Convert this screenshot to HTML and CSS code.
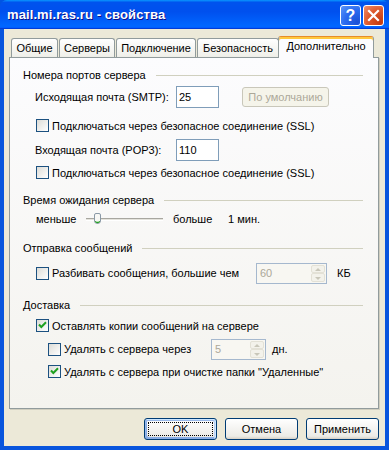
FILE: index.html
```html
<!DOCTYPE html>
<html lang="ru">
<head>
<meta charset="utf-8">
<title>mail.mi.ras.ru - свойства</title>
<link rel="stylesheet" href="styles.css">
</head>
<body>
<div class="window">
  <div class="titlebar">
    <span class="title">mail.mi.ras.ru - свойства</span>
    <div class="title-buttons">
      <span class="tbtn help">?</span>
      <span class="tbtn close"><svg width="13" height="13" viewBox="0 0 13 13"><path d="M2 2 L11 11 M11 2 L2 11" stroke="#fff" stroke-width="2.2" stroke-linecap="square"/></svg></span>
    </div>
  </div>
  <div class="body">
    <div class="tabs">
      <div class="tab t-general">Общие</div>
      <div class="tab t-servers">Серверы</div>
      <div class="tab t-connect">Подключение</div>
      <div class="tab t-security">Безопасность</div>
      <div class="tab active t-advanced">Дополнительно</div>
    </div>
    <div class="panel">
      <div class="group-head gh-ports"><span>Номера портов сервера</span><span class="rule"></span></div>
      <div class="row field r-smtp">
        <span class="field-label">Исходящая почта (SMTP):</span>
        <span class="textbox">25</span>
        <span class="button disabled">По умолчанию</span>
      </div>
      <div class="row check r-ssl1"><span class="cb"></span><span>Подключаться через безопасное соединение (SSL)</span></div>
      <div class="row field r-pop3">
        <span class="field-label">Входящая почта (POP3):</span>
        <span class="textbox">110</span>
      </div>
      <div class="row check r-ssl2"><span class="cb"></span><span>Подключаться через безопасное соединение (SSL)</span></div>

      <div class="group-head gh-timeout"><span>Время ожидания сервера</span><span class="rule"></span></div>
      <div class="row slider-row">
        <span class="s-less">меньше</span>
        <span class="track"><span class="thumb"><svg width="7" height="11" viewBox="0 0 7 11"><path d="M0.5 2 Q0.5 0.5 2 0.5 L5 0.5 Q6.5 0.5 6.5 2 L6.5 8 Q6.5 10.5 3.5 10.5 Q0.5 10.5 0.5 8 Z" fill="#F7F7F4" stroke="#8A99A6"/><path d="M1.2 8.4 Q3.5 10.6 5.8 8.4" fill="none" stroke="#21A121" stroke-width="1.2"/></svg></span></span>
        <span class="s-more">больше</span>
        <span class="s-value">1 мин.</span>
      </div>

      <div class="group-head gh-send"><span>Отправка сообщений</span><span class="rule"></span></div>
      <div class="row check r-split">
        <span class="cb"></span>
        <span class="split-label">Разбивать сообщения, большие чем</span>
        <span class="spin spin-kb"><span class="spin-val">60</span><span class="spin-btns"><span class="sb up"></span><span class="sb down"></span></span></span>
        <span class="unit-kb">КБ</span>
      </div>

      <div class="group-head gh-delivery"><span>Доставка</span><span class="rule"></span></div>
      <div class="row check r-keep"><span class="cb checked"><svg width="11" height="11" viewBox="0 0 11 11"><path d="M2 4.5 L4.3 7 L9 2.2" fill="none" stroke="#21A121" stroke-width="2"/></svg></span><span>Оставлять копии сообщений на сервере</span></div>
      <div class="row check sub r-del-after">
        <span class="cb"></span>
        <span class="del-label">Удалять с сервера через</span>
        <span class="spin spin-days"><span class="spin-val">5</span><span class="spin-btns"><span class="sb up"></span><span class="sb down"></span></span></span>
        <span class="unit-days">дн.</span>
      </div>
      <div class="row check sub r-del-clean"><span class="cb checked"><svg width="11" height="11" viewBox="0 0 11 11"><path d="M2 4.5 L4.3 7 L9 2.2" fill="none" stroke="#21A121" stroke-width="2"/></svg></span><span>Удалять с сервера при очистке папки "Удаленные"</span></div>
    </div>
    <div class="actions">
      <span class="button default">OK</span>
      <span class="button">Отмена</span>
      <span class="button">Применить</span>
    </div>
  </div>
</div>
</body>
</html>
```

FILE: styles.css
```css
* { box-sizing: border-box; }
html, body { margin: 0; padding: 0; }
body {
  width: 389px;
  height: 450px;
  overflow: hidden;
  background: #0054E3;
  font-family: "Liberation Sans", Arial, sans-serif;
  font-size: 11px;
  color: #000;
}
.window {
  width: 389px;
  height: 450px;
  display: flex;
  flex-direction: column;
  background: #0855DD;
  border-radius: 7px 7px 0 0;
  overflow: hidden;
}
.titlebar {
  height: 29px;
  flex: none;
  display: flex;
  align-items: center;
  justify-content: space-between;
  padding: 0 5px 0 7px;
  background: linear-gradient(180deg, #0997ff, #0053ee 8%, #0050ee 40%, #0066ff 88%, #0066ff 93%, #005bff 95%, #003dd7 96%, #003dd7);
}
.title {
  color: #fff;
  font-weight: bold;
  font-size: 13px;
  letter-spacing: 0.1px;
  text-shadow: 1px 1px #0F1089;
  padding-bottom: 1px;
}
.title-buttons { display: flex; gap: 2px; padding-top: 2px; }
.tbtn {
  width: 21px;
  height: 21px;
  border: 1px solid #fff;
  border-radius: 3px;
  display: flex;
  align-items: center;
  justify-content: center;
}
.help {
  background: radial-gradient(circle at 85% 85%, #1B4FD6 0%, #2C6CF0 55%, #5C97F8 100%);
  color: #fff;
  font-weight: bold;
  font-size: 16px;
  font-family: "Liberation Sans", Arial, sans-serif;
}
.close {
  background: radial-gradient(circle at 85% 85%, #C43A10 0%, #DD5A2E 55%, #F09070 100%);
}
.body {
  flex: 1;
  margin: 0 4px 4px;
  background: #ECE9D8;
  padding: 7px 6px 0 5px;
  display: flex;
  flex-direction: column;
}
.tabs {
  height: 21px;
  display: flex;
  align-items: flex-end;
  gap: 1px;
  padding-left: 2px;
  position: relative;
  z-index: 1;
}
.tab {
  height: 19px;
  flex: none;
  border: 1px solid #919B9C;
  border-bottom: none;
  border-radius: 3px 3px 0 0;
  background: linear-gradient(180deg, #fff, #fafaf9 26%, #f0f0ea 95%, #ecebe5);
  line-height: 18px;
  text-align: center;
  white-space: nowrap;
}
.t-general { width: 47px; }
.t-servers { width: 56px; }
.t-connect { width: 80px; }
.t-security { width: 82px; }
.t-advanced { width: 96px; }
.tab.active {
  height: 22px;
  margin-bottom: -1px;
  margin-left: -2px;
  background: #FCFCFE;
  border-top: 1px solid #E68B2C;
  box-shadow: inset 0 2px #FFC83C;
  line-height: 19px;
}
.panel {
  height: 352px;
  flex: none;
  border: 1px solid #919B9C;
  background: linear-gradient(180deg, #FCFCFE, #F4F3EE);
  box-shadow: 1px 1px 0 #D0CEBF;
  display: flex;
  flex-direction: column;
  padding: 10px 15px 0 0;
}
.group-head {
  height: 14px;
  display: flex;
  align-items: center;
  padding-left: 13px;
  white-space: nowrap;
}
.group-head .rule {
  flex: 1;
  height: 1px;
  background: #D0D0BF;
  margin-left: 10px;
}
.row { display: flex; align-items: center; white-space: nowrap; }
.field { height: 22px; padding-left: 25px; }
.check { height: 13px; padding-left: 26px; }
.check.sub { padding-left: 38px; }
.field-label { width: 141px; flex: none; }
.textbox {
  width: 43px;
  height: 22px;
  border: 1px solid #7F9DB9;
  background: #fff;
  padding-left: 2px;
  line-height: 20px;
}
.button {
  width: 73px;
  height: 22px;
  border: 1px solid #003C74;
  border-radius: 3px;
  background: linear-gradient(180deg, #fff, #ecebe6 86%, #d6d0c5);
  display: flex;
  align-items: center;
  justify-content: center;
  position: relative;
}
.button.default {
  box-shadow: inset -1px 1px #cee7ff, inset 1px 2px #98b8ea, inset -2px 2px #bcd4f6, inset 1px -1px #89ade4, inset 2px -2px #89ade4;
}
.button.default::after {
  content: "";
  position: absolute;
  inset: 3px;
  border: 1px dotted #000;
}
.button.disabled {
  width: 87px;
  height: 20px;
  margin-left: 23px;
  border-color: #C9C7BA;
  background: #F5F4EA;
  color: #ACA899;
}
.cb {
  width: 13px;
  height: 13px;
  flex: none;
  border: 1px solid #1C5180;
  background: linear-gradient(135deg, #DCDCD7, #FFFFFF);
  margin-right: 3px;
  display: flex;
}
.r-smtp { margin-top: 4px; }
.r-ssl1 { margin-top: 11px; }
.r-pop3 { margin-top: 7px; }
.r-ssl2 { margin-top: 5px; }
.gh-timeout { margin-top: 14px; }
.slider-row { margin-top: 5px; height: 14px; padding-left: 26px; }
.s-less { width: 50px; flex: none; }
.track {
  width: 77px;
  height: 3px;
  flex: none;
  border-top: 1px solid #A8A7A0;
  border-bottom: 1px solid #fff;
  background: #E4E3DC;
  position: relative;
}
.thumb {
  position: absolute;
  left: 8px;
  top: -6px;
  display: flex;
}
.s-more { width: 55px; flex: none; margin-left: 10px; }
.gh-send { margin-top: 15px; }
.r-split { margin-top: 7px; height: 22px; }
.split-label { width: 204px; flex: none; }
.spin {
  height: 21px;
  border: 1px solid #A5B8CE;
  background: #F8F7F2;
  display: flex;
  justify-content: space-between;
  color: #ACA899;
}
.spin-kb { width: 71px; }
.spin-days { width: 55px; }
.spin-val { padding-left: 3px; line-height: 19px; }
.spin-btns {
  width: 15px;
  display: flex;
  flex-direction: column;
  padding: 1px 1px 1px 0;
}
.sb {
  flex: 1;
  border: 1px solid #E3E1D6;
  border-radius: 2px;
  background: #F3F2EB;
  position: relative;
}
.sb::after {
  content: "";
  position: absolute;
  left: 3px;
  width: 0;
  height: 0;
  border-left: 3px solid transparent;
  border-right: 3px solid transparent;
}
.sb.up::after { top: 2px; border-bottom: 3px solid #C9C7BA; }
.sb.down::after { top: 3px; border-top: 3px solid #C9C7BA; }
.unit-kb { margin-left: 10px; }
.gh-delivery { margin-top: 14px; }
.r-keep { margin-top: 7px; }
.r-del-after { margin-top: 6px; height: 22px; }
.del-label { width: 147px; flex: none; }
.unit-days { margin-left: 6px; }
.r-del-clean { margin-top: 5px; }
.actions {
  display: flex;
  justify-content: flex-end;
  gap: 8px;
  margin-top: 9px;
}
```
